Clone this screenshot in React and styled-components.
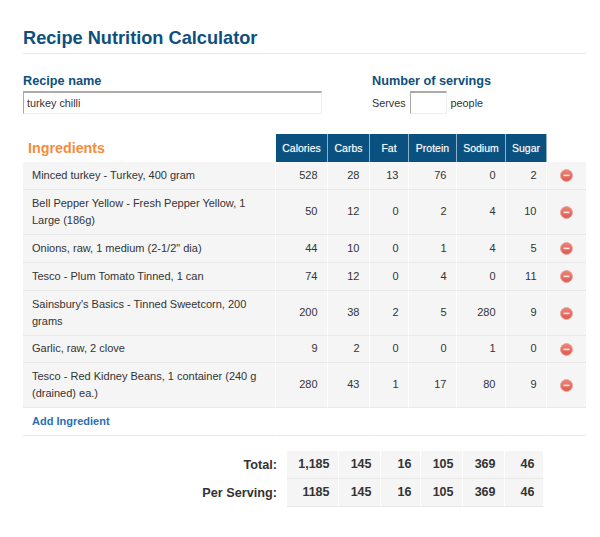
import React from 'react'
import styled, { createGlobalStyle } from 'styled-components'

const GlobalStyle = createGlobalStyle`
  html, body {
    margin: 0;
    background: #fff;
    font-family: "Liberation Sans", Arial, sans-serif;
    color: #333;
  }
`

const Page = styled.div`
  width: 563px;
  padding: 28px 14px 30px 23px;
`

const Title = styled.h1`
  margin: 0;
  padding-bottom: 5px;
  height: 20px;
  font-size: 18.2px;
  line-height: 20px;
  font-weight: bold;
  color: #0e4f7e;
  border-bottom: 1px solid #e8e8e8;
`

const RecipeForm = styled.div`
  display: flex;
  margin-top: 20px;
`

const Field = styled.div`
  width: ${(p) => p.width}px;
`

const Label = styled.label`
  display: block;
  font-size: 12.7px;
  line-height: 14px;
  font-weight: bold;
  color: #0e4f7e;
  margin-bottom: 3px;
`

const NameInput = styled.input`
  display: block;
  box-sizing: border-box;
  width: 299px;
  height: 23px;
  padding: 0 3px;
  font: 10.8px "Liberation Sans", Arial, sans-serif;
  color: #333;
  border: 1px solid #eee;
  border-top: 2px solid #aaa;
  border-left: 1px solid #aaa;
  outline: none;
`

const ServesRow = styled.div`
  display: flex;
  align-items: center;
  gap: 4px;
  font-size: 10.8px;
`

const ServesInput = styled(NameInput)`
  width: 37px;
  padding: 0 2px;
`

const Table = styled.table`
  border-collapse: separate;
  border-spacing: 0;
  table-layout: fixed;
  width: 563px;
  margin-top: 20px;
`

const Heading = styled.th`
  padding: 0 0 0 5px;
  text-align: left;
  font-size: 14.3px;
  font-weight: bold;
  color: #f58c3c;
`

const HeadCell = styled.th`
  height: 28px;
  padding: 0;
  background: #0b5180;
  border-right: 1px solid #8fb0c8;
  font-size: 10.5px;
  font-weight: normal;
  color: #fff;
  text-align: center;
  text-shadow: 0 0 1px rgba(255, 255, 255, 0.45);
`

const Cell = styled.td`
  padding: 0;
  background: ${(p) => (p.$plain ? '#fff' : '#f5f5f5')};
  border-right: 1px solid #fff;
  border-bottom: 1px solid #e8e8e8;
  font-size: 11px;
  line-height: 17.5px;
  color: #333;
`

const NameCell = styled(Cell)`
  height: ${(p) => p.$height}px;
  padding: 0 8px 0 9px;
`

const NumCell = styled(Cell)`
  text-align: right;
  padding-right: 9.5px;
`

const RemoveCell = styled(Cell)`
  border-right: 0;
  text-align: center;
  line-height: 0;
`

const AddLink = styled.a`
  font-size: 11px;
  font-weight: bold;
  color: #2a6fb5;
  text-decoration: none;
`

const Totals = styled.table`
  border-collapse: separate;
  border-spacing: 0;
  table-layout: fixed;
  width: 521px;
  margin-top: 15px;
`

const TotalLabel = styled.th`
  padding: 0 10px 1px 0;
  text-align: right;
  font-size: 12.7px;
  font-weight: bold;
  color: #333;
`

const TotalCell = styled.td`
  height: 26px;
  padding: 0 8.5px 1px 0;
  background: #f5f5f5;
  border-right: 1px solid #fff;
  border-bottom: 1px solid #e8e8e8;
  text-align: right;
  font-size: 12.5px;
  font-weight: bold;
  color: #333;
`

const RemoveIcon = () => (
  <svg width="13" height="13" viewBox="0 0 13 13" style={{ display: 'inline-block', verticalAlign: 'middle' }}>
    <defs>
      <linearGradient id="removeFill" x1="0" y1="0" x2="0" y2="1">
        <stop offset="0" stopColor="#ee8378" />
        <stop offset="1" stopColor="#dc5a4e" />
      </linearGradient>
    </defs>
    <circle cx="6.5" cy="6.5" r="6" fill="url(#removeFill)" stroke="#e6a79f" strokeWidth="1" />
    <rect x="3.5" y="5.6" width="6" height="1.6" fill="#fbe9e6" />
  </svg>
)

const columns = ['Calories', 'Carbs', 'Fat', 'Protein', 'Sodium', 'Sugar']
const colWidths = [52, 42, 39, 48, 49, 41, 39]
const totalWidths = [264, 52, 42, 40, 42, 42, 39]

const ingredients = [
  { name: 'Minced turkey - Turkey, 400 gram', h: 28, v: [528, 28, 13, 76, 0, 2] },
  { name: 'Bell Pepper Yellow - Fresh Pepper Yellow, 1 Large (186g)', h: 45, v: [50, 12, 0, 2, 4, 10] },
  { name: 'Onions, raw, 1 medium (2-1/2" dia)', h: 28, v: [44, 10, 0, 1, 4, 5] },
  { name: 'Tesco - Plum Tomato Tinned, 1 can', h: 28, v: [74, 12, 0, 4, 0, 11] },
  { name: "Sainsbury's Basics - Tinned Sweetcorn, 200 grams", h: 45, v: [200, 38, 2, 5, 280, 9] },
  { name: 'Garlic, raw, 2 clove', h: 27, v: [9, 2, 0, 0, 1, 0] },
  { name: 'Tesco - Red Kidney Beans, 1 container (240 g (drained) ea.)', h: 45, v: [280, 43, 1, 17, 80, 9] },
]

const totals = [
  { label: 'Total:', v: ['1,185', 145, 16, 105, 369, 46] },
  { label: 'Per Serving:', v: [1185, 145, 16, 105, 369, 46] },
]

export default function App() {
  return (
    <Page>
      <GlobalStyle />
      <Title>Recipe Nutrition Calculator</Title>

      <RecipeForm>
        <Field width={349}>
          <Label>Recipe name</Label>
          <NameInput defaultValue="turkey chilli" />
        </Field>
        <Field width={200}>
          <Label>Number of servings</Label>
          <ServesRow>
            Serves <ServesInput /> people
          </ServesRow>
        </Field>
      </RecipeForm>

      <Table>
        <colgroup>
          <col style={{ width: 253 }} />
          {colWidths.map((w, i) => <col key={i} style={{ width: w }} />)}
        </colgroup>
        <thead>
          <tr>
            <Heading>Ingredients</Heading>
            {columns.map((c) => <HeadCell key={c}>{c}</HeadCell>)}
            <th />
          </tr>
        </thead>
        <tbody>
          {ingredients.map((row) => (
            <tr key={row.name}>
              <NameCell $height={row.h - 1}>{row.name}</NameCell>
              {row.v.map((n, i) => <NumCell key={i}>{n}</NumCell>)}
              <RemoveCell><RemoveIcon /></RemoveCell>
            </tr>
          ))}
          <tr>
            <NameCell $plain $height={27}><AddLink href="#">Add Ingredient</AddLink></NameCell>
            {columns.map((c) => <NumCell $plain key={c} />)}
            <RemoveCell $plain />
          </tr>
        </tbody>
      </Table>

      <Totals>
        <colgroup>
          {totalWidths.map((w, i) => <col key={i} style={{ width: w }} />)}
        </colgroup>
        <tbody>
          {totals.map((row) => (
            <tr key={row.label}>
              <TotalLabel>{row.label}</TotalLabel>
              {row.v.map((n, i) => <TotalCell key={i}>{n}</TotalCell>)}
            </tr>
          ))}
        </tbody>
      </Totals>
    </Page>
  )
}
